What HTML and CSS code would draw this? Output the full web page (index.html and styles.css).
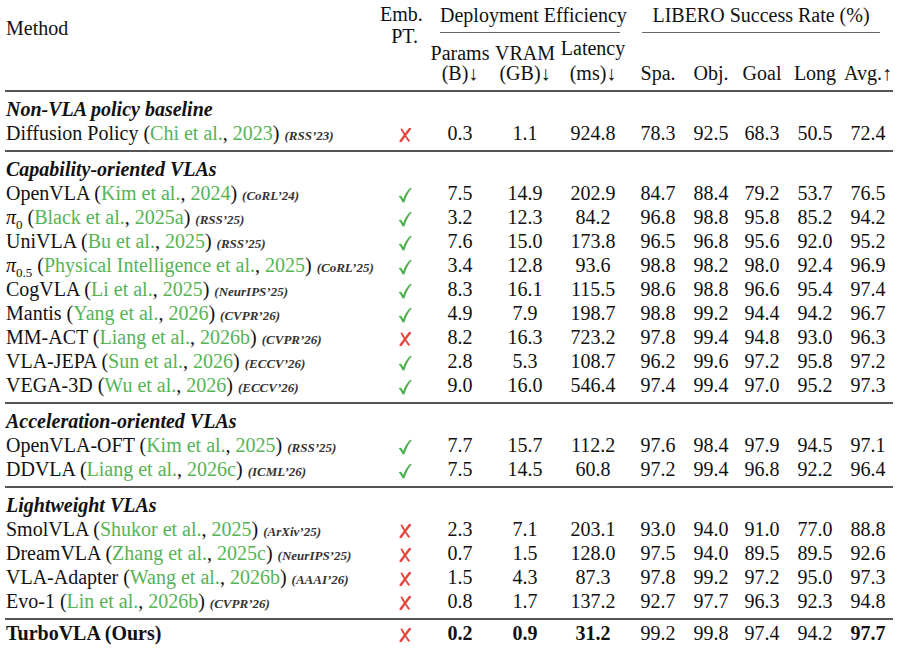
FILE: index.html
```html
<!DOCTYPE html>
<html lang="en">
<head>
    <meta charset="UTF-8">
    <title>LIBERO comparison</title>
    <link rel="stylesheet" href="styles.css">
</head>
<body>
<svg class="defs" width="0" height="0" aria-hidden="true">
    <symbol id="check" viewBox="0 0 14 16">
        <path d="M0.8 9.4 C1.9 8.5 3 8.4 3.7 9.5 L5.1 11.9 C6.9 7.4 9.4 3.4 12.7 0.6 L13.5 1.5 C10.6 4.9 8.2 9.6 6.4 15.2 L4.6 15.4 C3.6 12.9 2.4 10.9 0.8 9.4 Z"/>
    </symbol>
    <symbol id="cross" viewBox="0 0 12 14">
        <path d="M2.6 1.4 C4.6 5 7 9.2 9.9 12.8" fill="none" stroke-width="1.9" stroke-linecap="round"/>
        <path d="M10.8 0.9 C7.6 4.8 4.8 9 1.6 13.2" fill="none" stroke-width="2.4" stroke-linecap="round"/>
    </symbol>
</svg>

<table class="results">
    <colgroup>
        <col class="c-method">
        <col class="c-emb">
        <col class="c-params">
        <col class="c-vram">
        <col class="c-latency">
        <col class="c-spa">
        <col class="c-obj">
        <col class="c-goal">
        <col class="c-long">
        <col class="c-avg">
    </colgroup>
    <thead>
    <tr class="head-top">
        <th class="method-head" rowspan="2">Method</th>
        <th class="emb-head" rowspan="2">Emb.<br>PT.</th>
        <th colspan="3"><div class="group-label deploy">Deployment Efficiency</div></th>
        <th colspan="5"><div class="group-label libero">LIBERO Success Rate (%)</div></th>
    </tr>
    <tr class="head-sub">
        <th>Params<br>(B)↓</th>
        <th>VRAM<br>(GB)↓</th>
        <th><span class="latency-top">Latency</span>(ms)↓</th>
        <th>Spa.</th>
        <th>Obj.</th>
        <th>Goal</th>
        <th>Long</th>
        <th class="avg">Avg.↑</th>
    </tr>
    </thead>

    <tbody>
    <tr class="sec">
        <td class="section" colspan="10">Non-VLA policy baseline</td>
    </tr>
    <tr class="end">
        <td class="name">Diffusion Policy (<span class="cite">Chi et al.</span>, <span class="cite">2023</span>) <span class="venue">(RSS’23)</span></td>
        <td><svg class="mark no"><use href="#cross"/></svg></td><td>0.3</td><td>1.1</td><td>924.8</td><td>78.3</td><td>92.5</td><td>68.3</td><td>50.5</td><td class="avg">72.4</td>
    </tr>
    </tbody>

    <tbody>
    <tr class="sec">
        <td class="section" colspan="10">Capability-oriented VLAs</td>
    </tr>
    <tr>
        <td class="name">OpenVLA (<span class="cite">Kim et al.</span>, <span class="cite">2024</span>) <span class="venue">(CoRL’24)</span></td>
        <td><svg class="mark yes"><use href="#check"/></svg></td><td>7.5</td><td>14.9</td><td>202.9</td><td>84.7</td><td>88.4</td><td>79.2</td><td>53.7</td><td class="avg">76.5</td>
    </tr>
    <tr>
        <td class="name"><span class="pi">π</span><sub>0</sub> (<span class="cite">Black et al.</span>, <span class="cite">2025a</span>) <span class="venue">(RSS’25)</span></td>
        <td><svg class="mark yes"><use href="#check"/></svg></td><td>3.2</td><td>12.3</td><td>84.2</td><td>96.8</td><td>98.8</td><td>95.8</td><td>85.2</td><td class="avg">94.2</td>
    </tr>
    <tr>
        <td class="name">UniVLA (<span class="cite">Bu et al.</span>, <span class="cite">2025</span>) <span class="venue">(RSS’25)</span></td>
        <td><svg class="mark yes"><use href="#check"/></svg></td><td>7.6</td><td>15.0</td><td>173.8</td><td>96.5</td><td>96.8</td><td>95.6</td><td>92.0</td><td class="avg">95.2</td>
    </tr>
    <tr>
        <td class="name"><span class="pi">π</span><sub>0.5</sub> (<span class="cite">Physical Intelligence et al.</span>, <span class="cite">2025</span>) <span class="venue">(CoRL’25)</span></td>
        <td><svg class="mark yes"><use href="#check"/></svg></td><td>3.4</td><td>12.8</td><td>93.6</td><td>98.8</td><td>98.2</td><td>98.0</td><td>92.4</td><td class="avg">96.9</td>
    </tr>
    <tr>
        <td class="name">CogVLA (<span class="cite">Li et al.</span>, <span class="cite">2025</span>) <span class="venue">(NeurIPS’25)</span></td>
        <td><svg class="mark yes"><use href="#check"/></svg></td><td>8.3</td><td>16.1</td><td>115.5</td><td>98.6</td><td>98.8</td><td>96.6</td><td>95.4</td><td class="avg">97.4</td>
    </tr>
    <tr>
        <td class="name">Mantis (<span class="cite">Yang et al.</span>, <span class="cite">2026</span>) <span class="venue">(CVPR’26)</span></td>
        <td><svg class="mark yes"><use href="#check"/></svg></td><td>4.9</td><td>7.9</td><td>198.7</td><td>98.8</td><td>99.2</td><td>94.4</td><td>94.2</td><td class="avg">96.7</td>
    </tr>
    <tr>
        <td class="name">MM-ACT (<span class="cite">Liang et al.</span>, <span class="cite">2026b</span>) <span class="venue">(CVPR’26)</span></td>
        <td><svg class="mark no"><use href="#cross"/></svg></td><td>8.2</td><td>16.3</td><td>723.2</td><td>97.8</td><td>99.4</td><td>94.8</td><td>93.0</td><td class="avg">96.3</td>
    </tr>
    <tr>
        <td class="name">VLA-JEPA (<span class="cite">Sun et al.</span>, <span class="cite">2026</span>) <span class="venue">(ECCV’26)</span></td>
        <td><svg class="mark yes"><use href="#check"/></svg></td><td>2.8</td><td>5.3</td><td>108.7</td><td>96.2</td><td>99.6</td><td>97.2</td><td>95.8</td><td class="avg">97.2</td>
    </tr>
    <tr class="end">
        <td class="name">VEGA-3D (<span class="cite">Wu et al.</span>, <span class="cite">2026</span>) <span class="venue">(ECCV’26)</span></td>
        <td><svg class="mark yes"><use href="#check"/></svg></td><td>9.0</td><td>16.0</td><td>546.4</td><td>97.4</td><td>99.4</td><td>97.0</td><td>95.2</td><td class="avg">97.3</td>
    </tr>
    </tbody>

    <tbody>
    <tr class="sec">
        <td class="section" colspan="10">Acceleration-oriented VLAs</td>
    </tr>
    <tr>
        <td class="name">OpenVLA-OFT (<span class="cite">Kim et al.</span>, <span class="cite">2025</span>) <span class="venue">(RSS’25)</span></td>
        <td><svg class="mark yes"><use href="#check"/></svg></td><td>7.7</td><td>15.7</td><td>112.2</td><td>97.6</td><td>98.4</td><td>97.9</td><td>94.5</td><td class="avg">97.1</td>
    </tr>
    <tr class="end">
        <td class="name">DDVLA (<span class="cite">Liang et al.</span>, <span class="cite">2026c</span>) <span class="venue">(ICML’26)</span></td>
        <td><svg class="mark yes"><use href="#check"/></svg></td><td>7.5</td><td>14.5</td><td>60.8</td><td>97.2</td><td>99.4</td><td>96.8</td><td>92.2</td><td class="avg">96.4</td>
    </tr>
    </tbody>

    <tbody>
    <tr class="sec">
        <td class="section" colspan="10">Lightweight VLAs</td>
    </tr>
    <tr>
        <td class="name">SmolVLA (<span class="cite">Shukor et al.</span>, <span class="cite">2025</span>) <span class="venue">(ArXiv’25)</span></td>
        <td><svg class="mark no"><use href="#cross"/></svg></td><td>2.3</td><td>7.1</td><td>203.1</td><td>93.0</td><td>94.0</td><td>91.0</td><td>77.0</td><td class="avg">88.8</td>
    </tr>
    <tr>
        <td class="name">DreamVLA (<span class="cite">Zhang et al.</span>, <span class="cite">2025c</span>) <span class="venue">(NeurIPS’25)</span></td>
        <td><svg class="mark no"><use href="#cross"/></svg></td><td>0.7</td><td>1.5</td><td>128.0</td><td>97.5</td><td>94.0</td><td>89.5</td><td>89.5</td><td class="avg">92.6</td>
    </tr>
    <tr>
        <td class="name">VLA-Adapter (<span class="cite">Wang et al.</span>, <span class="cite">2026b</span>) <span class="venue">(AAAI’26)</span></td>
        <td><svg class="mark no"><use href="#cross"/></svg></td><td>1.5</td><td>4.3</td><td>87.3</td><td>97.8</td><td>99.2</td><td>97.2</td><td>95.0</td><td class="avg">97.3</td>
    </tr>
    <tr class="end">
        <td class="name">Evo-1 (<span class="cite">Lin et al.</span>, <span class="cite">2026b</span>) <span class="venue">(CVPR’26)</span></td>
        <td><svg class="mark no"><use href="#cross"/></svg></td><td>0.8</td><td>1.7</td><td>137.2</td><td>92.7</td><td>97.7</td><td>96.3</td><td>92.3</td><td class="avg">94.8</td>
    </tr>
    </tbody>

    <tbody>
    <tr class="ours">
        <td class="name">TurboVLA (Ours)</td>
        <td><svg class="mark no"><use href="#cross"/></svg></td><td><b>0.2</b></td><td><b>0.9</b></td><td><b>31.2</b></td><td>99.2</td><td>99.8</td><td>97.4</td><td>94.2</td><td class="avg"><b>97.7</b></td>
    </tr>
    </tbody>
</table>
</body>
</html>
```

FILE: styles.css
```css
body {
    background: #ffffff;
    color: #111;
    font-family: "Liberation Serif", "Times New Roman", serif;
    font-size: 20px;
    margin: 0;
}

.defs {
    position: absolute;
}

.results {
    table-layout: fixed;
    width: 888px;
    margin-left: 5px;
    border-collapse: collapse;
}

.c-method { width: 375px; }
.c-emb { width: 50px; }
.c-params { width: 60px; }
.c-vram { width: 70px; }
.c-latency { width: 66px; }
.c-spa { width: 64px; }
.c-obj { width: 42px; }
.c-goal { width: 60px; }
.c-long { width: 46px; }
.c-avg { width: 55px; }

/* header */

.results th {
    font-weight: normal;
    text-align: center;
    padding: 0;
    white-space: nowrap;
}

.results thead {
    border-bottom: 2px solid #555;
}

.head-top th {
    padding-top: 3px;
    vertical-align: top;
}

.method-head {
    text-align: left !important;
    padding: 16px 0 0 1px !important;
    line-height: 24px;
}

.emb-head {
    text-align: right !important;
    padding-right: 12px !important;
    line-height: 22px;
}

.group-label {
    line-height: 24px;
    padding-bottom: 5px;
    border-bottom: 1px solid #666;
}

.deploy {
    margin: 0 6px 0 10px;
}

.libero {
    margin: 0 13px 0 16px;
}

.head-sub th {
    line-height: 20px;
    padding: 5px 0 7px;
    vertical-align: bottom;
}

.latency-top {
    display: block;
    margin-bottom: 5px;
}

.results th.avg,
.results td.avg {
    padding-left: 5px;
}

/* body */

.results tbody + tbody {
    border-top: 2px solid #555;
}

.results td {
    height: 24px;
    line-height: 24px;
    padding: 0;
    text-align: center;
    white-space: nowrap;
}

.sec td {
    padding-top: 5px;
}

.end td {
    padding-bottom: 5px;
}

.ours td {
    padding-top: 1px;
}

.results td.section {
    text-align: left;
    padding-left: 1px;
    font-weight: bold;
    font-style: italic;
}

.results td.name {
    text-align: left;
    padding-left: 1px;
}

.ours td.name {
    font-weight: bold;
}

.cite {
    color: #56b356;
}

.venue {
    font-style: italic;
    font-weight: bold;
    font-size: 13px;
    line-height: 1;
    color: #333;
}

.pi {
    font-style: italic;
}

sub {
    font-size: 13px;
    line-height: 0;
}

.mark {
    vertical-align: middle;
}

.mark.yes {
    width: 14px;
    height: 16px;
    fill: #4caf50;
}

.mark.no {
    width: 12px;
    height: 14px;
    stroke: #e8453c;
}
```
